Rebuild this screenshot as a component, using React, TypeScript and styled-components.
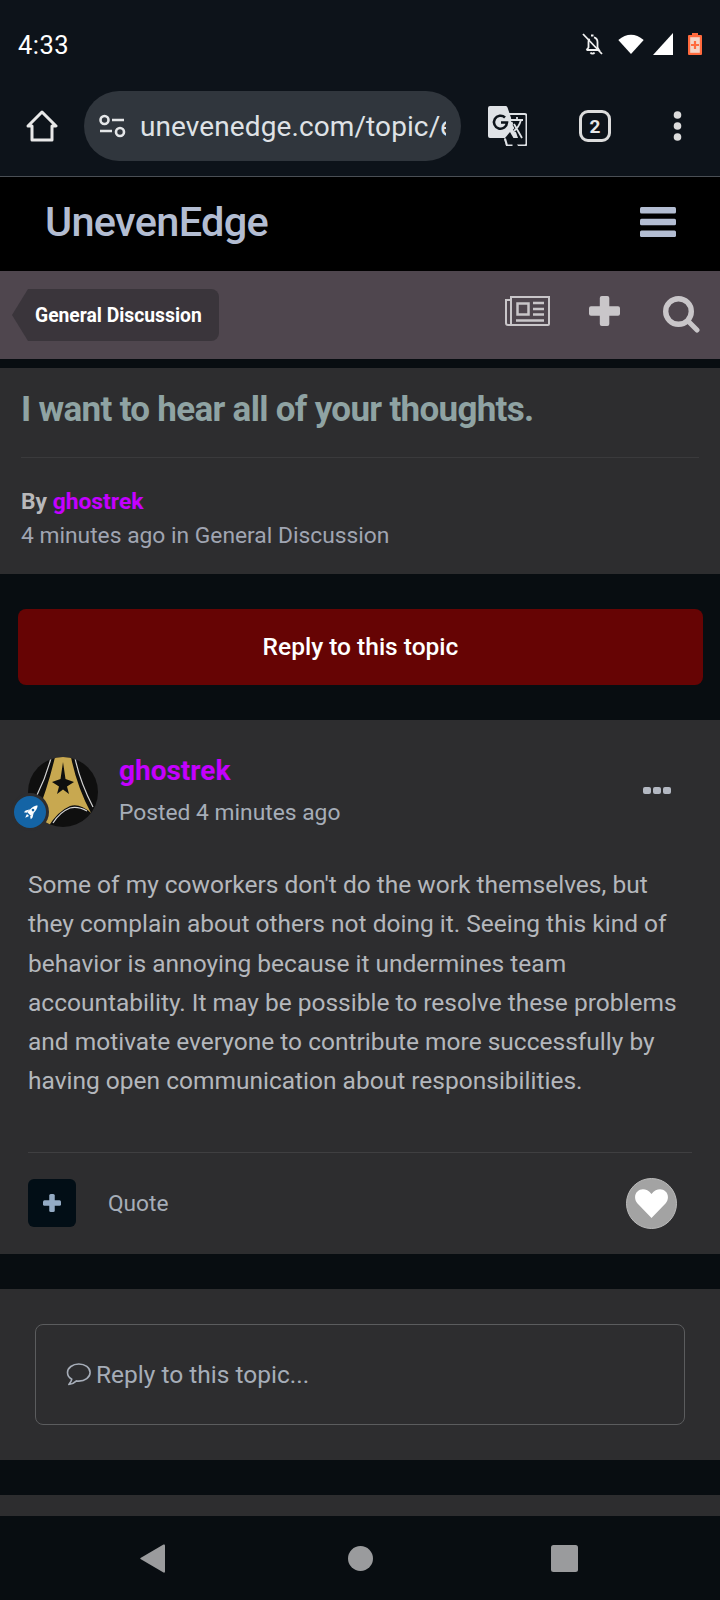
import React from "react";
import styled, { createGlobalStyle } from "styled-components";

const Global = createGlobalStyle`
  html, body { margin: 0; padding: 0; background: #0a0e12; }
  * { box-sizing: border-box; }
`;

const Page = styled.div`
  width: 720px;
  height: 1600px;
  overflow: hidden;
  display: flex;
  flex-direction: column;
  background: #080d11;
  font-family: Roboto, "Liberation Sans", sans-serif;
`;

const StatusBar = styled.div`
  height: 89px;
  flex: none;
  background: #0d131a;
  display: flex;
  align-items: center;
  justify-content: space-between;
  padding: 0 18px 0 18px;
  color: #fff;
`;
const Time = styled.span`
  font-size: 25.5px;
  letter-spacing: 0.5px;
`;
const StatusIcons = styled.div`
  display: flex;
  align-items: center;
  margin-top: -2px;
`;

const Toolbar = styled.div`
  height: 88px;
  flex: none;
  background: #0d131a;
  border-bottom: 1px solid #4a4f55;
  display: flex;
  align-items: center;
  padding: 0 0 14px 26px;
`;
const UrlPill = styled.div`
  width: 377px;
  height: 70px;
  margin-left: 26px;
  border-radius: 35px;
  background: #30363d;
  display: flex;
  align-items: center;
  padding: 0 15px 0 15px;
  gap: 14px;
  flex: none;
`;
const UrlText = styled.div`
  flex: 1;
  overflow: hidden;
  white-space: nowrap;
  color: #dfe2e6;
  font-size: 28px;
  letter-spacing: 0.1px;
  padding-top: 1px;
`;
const TranslateSlot = styled.div`
  margin-left: 27px;
  display: flex;
`;
const TabsSlot = styled.div`
  margin-left: 52px;
  display: flex;
`;
const DotsSlot = styled.div`
  margin-left: 62px;
  display: flex;
`;

const SiteHeader = styled.div`
  height: 94px;
  flex: none;
  background: #000;
  display: flex;
  align-items: center;
  justify-content: space-between;
  padding: 0 44px 0 45px;
  color: #b3bdd2;
`;
const Logo = styled.div`
  font-size: 41.5px;
  font-weight: 500;
  letter-spacing: -0.7px;
  margin-top: -6px;
`;
const Burger = styled.svg`
  margin-top: -4px;
`;

const CrumbBar = styled.div`
  height: 88px;
  flex: none;
  background: #4f464e;
  display: flex;
  align-items: center;
  justify-content: space-between;
  padding: 0 20px 0 12px;
  color: #c9c6c9;
`;
const Crumb = styled.div`
  width: 207px;
  height: 52px;
  background: #3a353b;
  border-radius: 8px;
  clip-path: polygon(0 50%, 16px 0, 100% 0, 100% 100%, 16px 100%);
  color: #fff;
  font-size: 19.3px;
  font-weight: 700;
  display: flex;
  align-items: center;
  padding-left: 23px;
  white-space: nowrap;
`;
const CrumbIcons = styled.div`
  display: flex;
  align-items: flex-start;
  height: 37px;
  margin-top: -1px;
`;

const Panel = styled.div`
  background: #2d2d2f;
  flex: none;
`;
const TopicPanel = styled(Panel)`
  margin-top: 9px;
  height: 206px;
  padding: 20px 21px 0;
`;
const Title = styled.h1`
  margin: 0;
  height: 70px;
  border-bottom: 1px solid #3a3a3c;
  color: #8fa3a3;
  font-size: 35px;
  line-height: 44px;
  font-weight: 700;
  letter-spacing: -0.7px;
  white-space: nowrap;
`;
const ByLine = styled.div`
  margin-top: 29px;
  font-size: 22.8px;
  line-height: 30px;
  font-weight: 700;
  color: #b8b8ba;
`;
const Author = styled.span`
  color: #c400ff;
`;
const Meta = styled.div`
  margin-top: 4px;
  font-size: 22.8px;
  line-height: 30px;
  color: #a0a5b2;
`;

const ReplyButton = styled.div`
  margin: 35px 17px 35px 18px;
  height: 76px;
  flex: none;
  background: #660404;
  border-radius: 8px;
  color: #fff;
  font-size: 24.5px;
  font-weight: 500;
  padding-bottom: 2px;
  display: flex;
  align-items: center;
  justify-content: center;
`;

const PostPanel = styled(Panel)`
  height: 534px;
  padding: 37px 28px 0;
  display: flex;
  flex-direction: column;
`;
const PostHead = styled.div`
  display: flex;
  align-items: flex-start;
  height: 70px;
`;
const AvatarWrap = styled.div`
  position: relative;
  width: 70px;
  height: 70px;
  flex: none;
`;
const Badge = styled.div`
  position: absolute;
  left: -14px;
  top: 39px;
  width: 32px;
  height: 32px;
  border-radius: 50%;
  background: #1464a5;
  box-shadow: 0 0 0 3px #2d2d2f;
  display: flex;
  align-items: center;
  justify-content: center;
`;
const Who = styled.div`
  margin-left: 21px;
  flex: 1;
`;
const Name = styled.div`
  color: #c400ff;
  font-size: 28px;
  line-height: 34px;
  font-weight: 700;
  margin-top: -3px;
`;
const Posted = styled.div`
  color: #a6adb8;
  font-size: 22.8px;
  line-height: 30px;
  margin-top: 10px;
`;
const More = styled.div`
  display: flex;
  gap: 2px;
  margin: 30px 21px 0 0;
`;
const MoreDot = styled.i`
  width: 8px;
  height: 7px;
  border-radius: 2px;
  background: #b3b8c2;
`;
const Body = styled.div`
  margin-top: 38px;
  height: 289px;
  color: #b4b7bc;
  font-size: 24.5px;
  line-height: 39.3px;
  border-bottom: 1px solid #3f3f41;
`;
const Actions = styled.div`
  display: flex;
  align-items: center;
  height: 102px;
  padding-right: 15px;
  margin-top: -1px;
`;
const PlusBtn = styled.div`
  width: 48px;
  height: 48px;
  border-radius: 6px;
  background: #020e16;
  color: #94abc4;
  display: flex;
  align-items: center;
  justify-content: center;
`;
const Quote = styled.span`
  margin-left: 32px;
  flex: 1;
  color: #a6adb8;
  font-size: 22.7px;
`;
const HeartBtn = styled.div`
  width: 51px;
  height: 51px;
  border-radius: 50%;
  background: #a3a3a3;
  border: 1px solid #bcbcbc;
  display: flex;
  align-items: center;
  justify-content: center;
`;

const EditorPanel = styled(Panel)`
  margin-top: 35px;
  height: 171px;
  padding: 35px 35px 0;
`;
const EditorBox = styled.div`
  height: 101px;
  border: 1px solid #5b5c5e;
  border-radius: 8px;
  display: flex;
  align-items: center;
  padding-left: 30px;
  gap: 5px;
  color: #a6adb8;
  font-size: 24.5px;
`;

const NextPanel = styled(Panel)`
  margin-top: 35px;
  height: 21px;
`;
const NavBar = styled.div`
  flex: 1;
  background: #080d11;
  display: grid;
  grid-template-columns: 165px 208px 205px 1fr;
  align-items: center;
  color: #9a9b9d;
`;
const NavCell = styled.div`
  display: flex;
  justify-content: flex-end;
`;
const NavEnd = styled.div``;

const Insignia = () => (
  <svg width="70" height="70" viewBox="0 0 70 70">
    <defs>
      <clipPath id="av"><circle cx="35" cy="35" r="35" /></clipPath>
    </defs>
    <g clipPath="url(#av)">
      <rect width="70" height="70" fill="#0f0f0f" />
      <path d="M27 0 H43 Q49 30 63 56 Q52 46 42 49 Q30 54 20 70 L8 60 Q20 30 27 0Z" fill="#c8a850" />
      <path d="M23 1 Q18 20 9 38" stroke="#d4d4d4" strokeWidth="1.2" fill="none" />
      <path d="M47 1 Q52 25 65 50" stroke="#d4d4d4" strokeWidth="1.2" fill="none" />
      <path d="M25 66 Q32 55 42 51 Q50 49 59 54" stroke="#d8d8d8" strokeWidth="1.2" fill="none" />
      <path d="M35 5 L37.500 22 L46 25 L39 29.500 L41 37 L35 32.500 L29 37 L31 29.500 L24 25 L32.500 22Z" fill="#0f0f0f" />
    </g>
  </svg>
);

const Rocket = () => (
  <svg width="17" height="17" viewBox="0 0 17 17">
    <g transform="rotate(45 8.500 8.500)" fill="#fff">
      <path d="M8.500 -1.500C11 1 11.200 5 11 10.500H6C5.800 5 6 1 8.500 -1.500Z" />
      <path d="M6 6.500 3.600 10.500V13L6 11.500ZM11 6.500 13.400 10.500V13L11 11.500Z" />
      <path d="M7 12h3L8.500 16Z" />
      <circle cx="8.500" cy="5" r="1.300" fill="#1464a5" />
    </g>
  </svg>
);

const PlusGlyph = ({ w, h, t }: { w: number; h: number; t: number }) => (
  <svg width={w} height={h} viewBox={`0 0 ${w} ${h}`} fill="currentColor">
    <rect x={0} y={(h - t) / 2} width={w} height={t} rx={1.5} />
    <rect x={(w - t) / 2} y={0} width={t} height={h} rx={1.5} />
  </svg>
);

export default function App() {
  return (
    <Page>
      <Global />
      <StatusBar>
        <Time>4:33</Time>
        <StatusIcons>
          <svg width="21" height="22" viewBox="0 0 21 22" fill="none" stroke="#f2f2f2" strokeWidth="1.8">
            <path d="M4.500 17h12.500l-1.500-2.500V9a5 5 0 0 0-3.500-4.700M7.500 5.800A5 5 0 0 0 6.500 9v5.500L4.500 17" />
            <path d="M9 2.500h2.500M8.500 19.500a2.300 2.300 0 0 0 4 0" />
            <path d="M1 1 20 21" />
          </svg>
          <svg width="26" height="20" viewBox="0 0 26 20" style={{ marginLeft: 15 }}>
            <path d="M0.300 6 Q13 -4.500 25.700 6 L13 20Z" fill="#fff" />
          </svg>
          <svg width="20" height="22" viewBox="0 0 20 22" style={{ marginLeft: 9 }}>
            <path d="M20 0V22H0Z" fill="#fff" />
          </svg>
          <svg width="14" height="22" viewBox="0 0 14 22" style={{ marginLeft: 15 }}>
            <path d="M4 0h6v2h3a1 1 0 0 1 1 1v18a1 1 0 0 1-1 1H1a1 1 0 0 1-1-1V3a1 1 0 0 1 1-1h3Z" fill="#ff6a3d" />
            <rect x="2.200" y="4.200" width="9.600" height="15.600" fill="#f3d5c8" />
            <path d="M5.900 8h2.200v2.900H11v2.200H8.100V16H5.900v-2.900H3v-2.200h2.900Z" fill="#ff6a3d" />
          </svg>
        </StatusIcons>
      </StatusBar>
      <Toolbar>
        <svg width="32" height="32" viewBox="0 0 32 32" fill="none" stroke="#e8e8e8" strokeWidth="3" strokeLinejoin="round">
          <path d="M2 16 16 2l14 14h-4v14H6V16Z" />
        </svg>
        <UrlPill>
          <svg width="27" height="24" viewBox="0 0 27 24" fill="none" stroke="#e4e6e8" strokeWidth="2.600">
            <circle cx="5.500" cy="6" r="4" />
            <path d="M13 6h12M1 17h12" />
            <circle cx="21" cy="18" r="4" />
          </svg>
          <UrlText>unevenedge.com/topic/example</UrlText>
        </UrlPill>
        <TranslateSlot>
          <svg width="39" height="40" viewBox="0 0 39 40">
            <path d="M2 0h16q1 0 1.500 1.500L30 32H2a2 2 0 0 1-2-2V2a2 2 0 0 1 2-2Z" fill="#dfe2e6" />
            <path d="M20 8h16.500a2 2 0 0 1 2 2v27.500a2 2 0 0 1-2 2H19l-2-7" fill="none" stroke="#dfe2e6" strokeWidth="2" />
            <path d="M17 11.500A6.500 6.500 0 1 0 19 16.500h-6" fill="none" stroke="#0d131a" strokeWidth="2.600" />
            <path d="M17 32 22 26 L30 40 L18 40Z" fill="#0d131a" />
            <path d="M23 14h12M29 11v3M33 14q-2 7-7 11M26 18l8 14" fill="none" stroke="#0d131a" strokeWidth="3.500" />
            <path d="M23 14h12M29 11v3M33 14q-2 7-7 11M26 18l8 14" fill="none" stroke="#dfe2e6" strokeWidth="1.800" />
            <path d="M21 34h3l1 5H19.500Z" fill="#0d131a" />
            <path d="M17 32.500 19 39.500h5.500" fill="none" stroke="#dfe2e6" strokeWidth="2" />
          </svg>
        </TranslateSlot>
        <TabsSlot>
          <svg width="32" height="32" viewBox="0 0 32 32">
            <rect x="1.500" y="1.500" width="29" height="29" rx="7.500" fill="none" stroke="#dcdcdc" strokeWidth="3" />
            <text x="16" y="23" textAnchor="middle" fontFamily="Roboto" fontWeight="700" fontSize="19" fill="#e8e8e8">2</text>
          </svg>
        </TabsSlot>
        <DotsSlot>
          <svg width="9" height="30" viewBox="0 0 9 30" fill="#dcdcdc">
            <circle cx="4.500" cy="4" r="3.800" />
            <circle cx="4.500" cy="15" r="3.800" />
            <circle cx="4.500" cy="26" r="3.800" />
          </svg>
        </DotsSlot>
      </Toolbar>
      <SiteHeader>
        <Logo>UnevenEdge</Logo>
        <Burger width="36" height="30" viewBox="0 0 36 30" fill="currentColor">
          <rect y="0" width="36" height="6.500" rx="1.500" />
          <rect y="11.800" width="36" height="6.500" rx="1.500" />
          <rect y="23.500" width="36" height="6.500" rx="1.500" />
        </Burger>
      </SiteHeader>
      <CrumbBar>
        <Crumb>General Discussion</Crumb>
        <CrumbIcons>
          <svg width="45" height="30" viewBox="0 0 45 30" fill="none" stroke="currentColor" strokeWidth="2">
            <path d="M6 4V1h38v27a1 1 0 0 1-1 1H3a2 2 0 0 1-2-2V4h5v25" />
            <rect x="12.500" y="7.500" width="11" height="11" strokeWidth="2.500" />
            <path d="M28 7h11M28 13h11M28 18.500h11M11 24.500h28" strokeWidth="2.600" />
          </svg>
          <svg width="31" height="30" viewBox="0 0 31 30" style={{ marginLeft: 39 }}>
            <rect x="0" y="10.300" width="31" height="9.500" rx="2" fill="currentColor" />
            <rect x="10.800" y="0" width="9.500" height="30" rx="2" fill="currentColor" />
          </svg>
          <svg width="37" height="37" viewBox="0 0 37 37" fill="none" stroke="currentColor" style={{ marginLeft: 43 }}>
            <circle cx="15.500" cy="15.500" r="12.800" strokeWidth="5.400" />
            <path d="M25 25 34 34" strokeWidth="5" strokeLinecap="round" />
          </svg>
        </CrumbIcons>
      </CrumbBar>
      <TopicPanel>
        <Title>I want to hear all of your thoughts.</Title>
        <ByLine>By <Author>ghostrek</Author></ByLine>
        <Meta>4 minutes ago in General Discussion</Meta>
      </TopicPanel>
      <ReplyButton>Reply to this topic</ReplyButton>
      <PostPanel>
        <PostHead>
          <AvatarWrap>
            <Insignia />
            <Badge><Rocket /></Badge>
          </AvatarWrap>
          <Who>
            <Name>ghostrek</Name>
            <Posted>Posted 4 minutes ago</Posted>
          </Who>
          <More><MoreDot /><MoreDot /><MoreDot /></More>
        </PostHead>
        <Body>
          Some of my coworkers don't do the work themselves, but they complain about others not doing it. Seeing this kind of behavior is annoying because it undermines team accountability. It may be possible to resolve these problems and motivate everyone to contribute more successfully by having open communication about responsibilities.
        </Body>
        <Actions>
          <PlusBtn><PlusGlyph w={18} h={18} t={5.5} /></PlusBtn>
          <Quote>Quote</Quote>
          <HeartBtn>
            <svg width="33" height="29" viewBox="0 0 33 29" fill="#fff">
              <path d="M16.500 29 2.500 14.500C-1 10.500 -0.500 5 2.500 2.500 6 -0.800 12 -0.500 16.500 5 21 -0.500 27 -0.800 30.500 2.500 33.500 5 34 10.500 30.500 14.500Z" />
            </svg>
          </HeartBtn>
        </Actions>
      </PostPanel>
      <EditorPanel>
        <EditorBox>
          <svg width="25" height="23" viewBox="0 0 25 23" fill="none" stroke="currentColor" strokeWidth="1.600" strokeLinejoin="round">
            <path d="M12.800 1C6.600 1 1.500 4.800 1.500 9.500c0 2.800 1.700 5.200 4.300 6.700-.3 1.700-1.200 3.500-3 5.300 2.900-.3 5.600-1.500 7.700-3.600.8.100 1.500.2 2.300.2 6.200 0 11.300-3.800 11.300-8.600S19 1 12.800 1Z" />
          </svg>
          <span>Reply to this topic...</span>
        </EditorBox>
      </EditorPanel>
      <NextPanel />
      <NavBar>
        <NavCell>
          <svg width="25" height="29" viewBox="0 0 25 29" fill="currentColor"><path d="M25 1.500V27.500Q25 29 23.500 28.500L0.500 15Q0 14.500 0.500 14L23.500 0.500Q25 0 25 1.500Z" /></svg>
        </NavCell>
        <NavCell>
          <svg width="25" height="25" viewBox="0 0 25 25" fill="currentColor"><circle cx="12.500" cy="12.500" r="12.500" /></svg>
        </NavCell>
        <NavCell>
          <svg width="27" height="27" viewBox="0 0 27 27" fill="currentColor"><rect width="27" height="27" rx="2.500" /></svg>
        </NavCell>
        <NavEnd />
      </NavBar>
    </Page>
  );
}
